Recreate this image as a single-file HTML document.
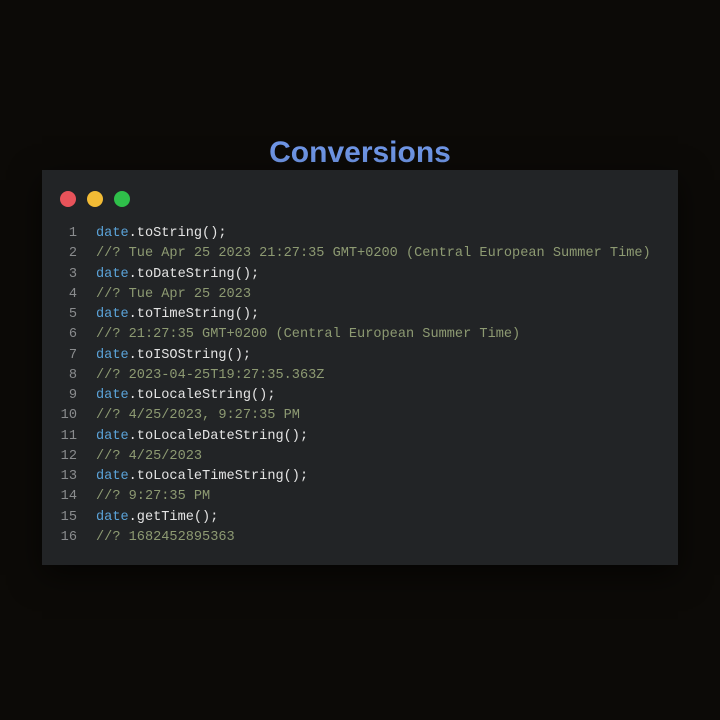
<!DOCTYPE html>
<html><head><style>
html,body{margin:0;padding:0;}
body{width:720px;height:720px;background:#0c0a07;position:relative;overflow:hidden;font-family:"Liberation Mono",monospace;}
h1{position:absolute;top:136px;left:0;width:720px;text-align:center;margin:0;font:bold 30px "Liberation Sans",sans-serif;color:#6f96e6;}
.card{position:absolute;left:42px;top:170px;width:636px;height:395px;background:#222426;box-shadow:0 10px 30px rgba(0,0,0,.6);}
.dot{position:absolute;top:191px;width:16px;height:16px;border-radius:50%;}
.code{position:absolute;left:0;top:224px;font-size:13.6px;line-height:20.27px;white-space:pre;}
.ln{display:inline-block;width:77px;text-align:right;color:#8a8c8e;padding-right:19px;}
.v{color:#5ba3d9}.f{color:#e4e4e4}.c{color:#8d9a72}
</style></head><body>
<h1>Conversions</h1>
<div class="card"></div>
<div class="dot" style="left:60px;background:#e8535a"></div>
<div class="dot" style="left:87px;background:#f2bb35"></div>
<div class="dot" style="left:114px;background:#2fbf4a"></div>
<div class="code"><span class="ln">1</span><span class="v">date</span><span class="f">.toString();</span>
<span class="ln">2</span><span class="c">//? Tue Apr 25 2023 21:27:35 GMT+0200 (Central European Summer Time)</span>
<span class="ln">3</span><span class="v">date</span><span class="f">.toDateString();</span>
<span class="ln">4</span><span class="c">//? Tue Apr 25 2023</span>
<span class="ln">5</span><span class="v">date</span><span class="f">.toTimeString();</span>
<span class="ln">6</span><span class="c">//? 21:27:35 GMT+0200 (Central European Summer Time)</span>
<span class="ln">7</span><span class="v">date</span><span class="f">.toISOString();</span>
<span class="ln">8</span><span class="c">//? 2023-04-25T19:27:35.363Z</span>
<span class="ln">9</span><span class="v">date</span><span class="f">.toLocaleString();</span>
<span class="ln">10</span><span class="c">//? 4/25/2023, 9:27:35 PM</span>
<span class="ln">11</span><span class="v">date</span><span class="f">.toLocaleDateString();</span>
<span class="ln">12</span><span class="c">//? 4/25/2023</span>
<span class="ln">13</span><span class="v">date</span><span class="f">.toLocaleTimeString();</span>
<span class="ln">14</span><span class="c">//? 9:27:35 PM</span>
<span class="ln">15</span><span class="v">date</span><span class="f">.getTime();</span>
<span class="ln">16</span><span class="c">//? 1682452895363</span></div>
</body></html>
